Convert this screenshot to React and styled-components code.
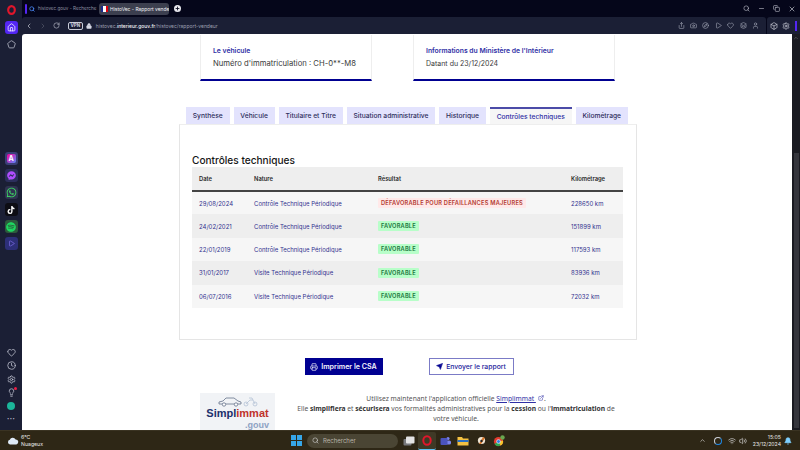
import React from 'react'
import styled, {createGlobalStyle} from 'styled-components'
import {
  Search, Minus, X, ChevronLeft, ChevronRight, RotateCw, Lock, Heart, Clock,
  Settings, Lightbulb, House, Printer, Send, ExternalLink, Camera, Plus,
  ChevronUp, Wifi, Volume2, Bell, Pentagon, Compass, Play, Layers, User,
  Share, Box, Copy
} from 'lucide-react'
import {FaWhatsapp, FaTiktok, FaSpotify, FaFacebookMessenger} from 'react-icons/fa'

const GlobalStyle = createGlobalStyle`
  html, body {
    margin: 0;
    width: 800px;
    height: 450px;
    overflow: hidden;
    background: #05061a;
  }
  * { box-sizing: border-box; }
  svg { flex: none; }
`

const tabs = [
  'Synthèse',
  'Véhicule',
  'Titulaire et Titre',
  'Situation administrative',
  'Historique',
  'Contrôles techniques',
  'Kilométrage'
]

const controls = [
  {date: '29/08/2024', nature: 'Contrôle Technique Périodique', result: 'DÉFAVORABLE POUR DÉFAILLANCES MAJEURES', bad: true, km: '228650 km'},
  {date: '24/02/2021', nature: 'Contrôle Technique Périodique', result: 'FAVORABLE', km: '151899 km'},
  {date: '22/01/2019', nature: 'Contrôle Technique Périodique', result: 'FAVORABLE', km: '117593 km'},
  {date: '31/01/2017', nature: 'Visite Technique Périodique', result: 'FAVORABLE', km: '83936 km'},
  {date: '06/07/2016', nature: 'Visite Technique Périodique', result: 'FAVORABLE', km: '72032 km'}
]

export default function App() {
  return (
    <Screen>
      <GlobalStyle />
      <Browser>
        <Sidebar>
          <OperaLogo />
          <HomeButton><House size={9} color="#fff" /></HomeButton>
          <SideIcon><Pentagon size={9} /></SideIcon>
          <AppGroup>
            <AppTile $bg="#3b3f78"><AppMark $bg="linear-gradient(135deg,#f09,#58f)">A</AppMark></AppTile>
            <AppTile $bg="#2c2f5c"><FaFacebookMessenger size={9} color="#b04dff" /></AppTile>
            <AppTile $bg="#2f3350"><FaWhatsapp size={11} color="#3fdc64" /></AppTile>
            <AppTile $bg="#0d0d14"><FaTiktok size={8} color="#fff" /></AppTile>
            <AppTile $bg="#2c5b3c"><FaSpotify size={10} color="#1ed760" /></AppTile>
            <AppTile $bg="#2d2f78"><Play size={7} color="#8f7bff" /></AppTile>
          </AppGroup>
          <BottomGroup>
            <SideIcon><Heart size={9} /></SideIcon>
            <SideIcon><Clock size={9} /></SideIcon>
            <SideIcon><Settings size={9} /></SideIcon>
            <SideIcon>
              <Lightbulb size={9} />
              <RedDot />
            </SideIcon>
            <SideIcon><GreenBadge /></SideIcon>
            <Dots>•••</Dots>
          </BottomGroup>
        </Sidebar>

        <Main>
          <TabStrip>
            <AccentBar />
            <BrowserTab>
              <Search size={6} color="#4d8dff" strokeWidth={3} />
              <TabLabel>histovec.gouv - Recherche</TabLabel>
            </BrowserTab>
            <BrowserTab $active>
              <Favicon><i /><i /><i /></Favicon>
              <TabLabel $active>HistoVec - Rapport vende</TabLabel>
            </BrowserTab>
            <NewTab><Plus size={5} strokeWidth={4} color="#05061a" /></NewTab>
            <WindowControls>
              <Search size={7} />
              <Minus size={7} />
              <Copy size={7} />
              <X size={8} />
            </WindowControls>
          </TabStrip>

          <ToolbarRow>
            <Toolbar>
              <NavIcons>
                <ChevronLeft size={8} />
                <ChevronRight size={8} opacity={0.35} />
                <RotateCw size={7} />
              </NavIcons>
              <VpnPill>VPN</VpnPill>
              <Lock size={6} color="#d6d8e4" fill="#d6d8e4" />
              <Url>histovec.<b>interieur.gouv.fr</b>/histovec/rapport-vendeur</Url>
              <ToolIcons>
                <Share size={7} />
                <Camera size={7} />
                <Compass size={7} />
                <Play size={7} />
                <Heart size={7} />
                <Layers size={7} />
                <User size={7} />
              </ToolIcons>
            </Toolbar>
            <ToolbarEnd>
              <Box size={8} />
              <Settings size={8} />
              <EndAccent />
            </ToolbarEnd>
          </ToolbarRow>

          <Viewport>
            <Page>
              <Container>
                <Cards>
                  <Card $width={172}>
                    <CardTitle>Le véhicule</CardTitle>
                    <CardText $size={7.7}>Numéro d'immatriculation : CH-0**-M8</CardText>
                  </Card>
                  <Card $width={202}>
                    <CardTitle>Informations du Ministère de l'Intérieur</CardTitle>
                    <CardText $size={7}>Datant du 23/12/2024</CardText>
                  </Card>
                </Cards>

                <Tabs>
                  {tabs.map(tab => (
                    <Tab key={tab} $active={tab === 'Contrôles techniques'}>{tab}</Tab>
                  ))}
                </Tabs>

                <Panel>
                  <Heading>Contrôles techniques</Heading>
                  <Table>
                    <thead>
                      <tr>
                        <Th $width={55}>Date</Th>
                        <Th $width={124}>Nature</Th>
                        <Th $width={193}>Résultat</Th>
                        <Th>Kilométrage</Th>
                      </tr>
                    </thead>
                    <tbody>
                      {controls.map(row => (
                        <Row key={row.date}>
                          <Td>{row.date}</Td>
                          <Td>{row.nature}</Td>
                          <Td><Badge $bad={row.bad}>{row.result}</Badge></Td>
                          <Td>{row.km}</Td>
                        </Row>
                      ))}
                    </tbody>
                  </Table>
                </Panel>

                <Actions>
                  <PrimaryButton><Printer size={8} />Imprimer le CSA</PrimaryButton>
                  <SecondaryButton><Send size={7} fill="#000091" />Envoyer le rapport</SecondaryButton>
                </Actions>

                <Promo>
                  <Logo>
                    <svg width="42" height="11" viewBox="0 0 42 11" fill="none" stroke="#64718a" strokeWidth="0.8">
                      <path d="M2 8 V6 L6 5 L9 2 H17 L21 5 L24 6 V8 Z" />
                      <circle cx="7" cy="8.5" r="1.7" fill="#fff" />
                      <circle cx="19" cy="8.5" r="1.7" fill="#fff" />
                      <g stroke="#b4c2d6">
                        <circle cx="29" cy="8" r="2" />
                        <circle cx="38" cy="8" r="2" />
                        <path d="M29 8 L33 4 H36 L38 8 M32 2 H35 L36 4" />
                      </g>
                    </svg>
                    <LogoName>Simpl<em>immat</em></LogoName>
                    <LogoGouv>.gouv</LogoGouv>
                  </Logo>
                  <PromoText>
                    Utilisez maintenant l'application officielle <PromoLink>Simplimmat <ExternalLink size={6} /></PromoLink>.<br />
                    Elle <b>simplifiera</b> et <b>sécurisera</b> vos formalités administratives pour la <b>cession</b> ou l'<b>immatriculation</b> de<br />
                    votre véhicule.
                  </PromoText>
                </Promo>
              </Container>
            </Page>
            <Scrollbar>
              <ChevronUp size={6} color="#777" />
              <ScrollThumb />
            </Scrollbar>
          </Viewport>
        </Main>
      </Browser>

      <Taskbar>
        <Weather>
          <svg width="12" height="9" viewBox="0 0 12 9">
            <path d="M3 8.5 A2.4 2.4 0 0 1 2.8 3.8 A3.2 3.2 0 0 1 8.6 3.4 A2.6 2.6 0 0 1 9.4 8.5 Z" fill="#dfeaf7" />
          </svg>
          <WeatherText>
            <span>6°C</span>
            <span>Nuageux</span>
          </WeatherText>
        </Weather>
        <TaskCenter>
          <WinLogo><i /><i /><i /><i /></WinLogo>
          <SearchPill><Search size={7} color="#d8d8d8" />Rechercher</SearchPill>
          <TaskIcon>
            <svg width="12" height="10" viewBox="0 0 12 10">
              <rect x="0.5" y="3" width="8" height="6.5" rx="1" fill="#77787c" />
              <rect x="3" y="0.5" width="8.5" height="7" rx="1" fill="#e4e4e4" />
            </svg>
          </TaskIcon>
          <TaskIcon $active>
            <svg width="10" height="11" viewBox="0 0 10 11">
              <ellipse cx="5" cy="5.5" rx="3.7" ry="4.3" fill="none" stroke="#e0162b" strokeWidth="2" />
            </svg>
          </TaskIcon>
          <TaskIcon>
            <svg width="11" height="10" viewBox="0 0 11 10">
              <circle cx="8" cy="2.5" r="1.6" fill="#7b83eb" />
              <rect x="6" y="4.5" width="5" height="4" rx="1.5" fill="#7b83eb" />
              <rect x="0.5" y="2" width="7" height="7" rx="1" fill="#4b53bc" />
            </svg>
          </TaskIcon>
          <TaskIcon>
            <svg width="12" height="10" viewBox="0 0 12 10">
              <path d="M0.5 1 H5 L6 2.5 H11.5 V9.5 H0.5 Z" fill="#f5c242" />
              <rect x="0.5" y="4" width="11" height="2" fill="#2a6fc4" />
            </svg>
          </TaskIcon>
          <TaskIcon>
            <svg width="11" height="11" viewBox="0 0 11 11">
              <circle cx="5.5" cy="5.5" r="3.6" fill="#efe5d4" />
              <path d="M3 9 L7 2 L9 3 L5 9 Z" fill="#d9772b" />
              <circle cx="5.5" cy="6" r="1.2" fill="#222" />
            </svg>
          </TaskIcon>
          <TaskIcon>
            <svg width="12" height="12" viewBox="0 0 12 12">
              <circle cx="5.5" cy="6.5" r="4.6" fill="#e33b2e" />
              <path d="M5.5 6.5 L1.5 9 A4.6 4.6 0 0 0 7.5 10.6 Z" fill="#2da94f" />
              <path d="M5.5 6.5 L7.5 10.6 A4.6 4.6 0 0 0 10 5.5 Z" fill="#f7c52b" />
              <circle cx="5.5" cy="6.5" r="1.9" fill="#2f7de1" stroke="#fff" strokeWidth="0.6" />
              <circle cx="9.5" cy="2.5" r="2.2" fill="#6aa84f" />
            </svg>
          </TaskIcon>
        </TaskCenter>
        <Tray>
          <ChevronUp size={7} color="#e8e8e8" />
          <TrayApp />
          <Wifi size={8} color="#d6d6d6" />
          <Volume2 size={8} color="#d6d6d6" />
          <ClockText>
            <span>15:05</span>
            <span>23/12/2024</span>
          </ClockText>
          <Bell size={8} color="#7fd0ff" fill="#7fd0ff" />
        </Tray>
      </Taskbar>
    </Screen>
  )
}

const OperaLogo = () => (
  <svg width="9" height="10" viewBox="0 0 9 10" style={{marginBottom: 6}}>
    <ellipse cx="4.5" cy="5" rx="3.3" ry="3.9" fill="none" stroke="#e0162b" strokeWidth="2.2" />
  </svg>
)

//styled components

const Screen = styled.div`
  width: 800px;
  height: 450px;
  display: flex;
  flex-direction: column;
  overflow: hidden;
  font-family: 'Inter', 'Noto Sans', sans-serif;
`
const Browser = styled.div`
  height: 430px;
  display: flex;
  background: #05061a;
`
const Sidebar = styled.aside`
  width: 22px;
  flex: none;
  display: flex;
  flex-direction: column;
  align-items: center;
  padding: 5px 0 9px 0;
  background: #1b1f35;
`
const HomeButton = styled.div`
  width: 13px;
  height: 13px;
  border-radius: 3px;
  display: flex;
  align-items: center;
  justify-content: center;
  background: #5326f2;
`
const SideIcon = styled.div`
  position: relative;
  width: 13px;
  height: 13px;
  margin-top: 4px;
  display: flex;
  align-items: center;
  justify-content: center;
  color: #c4c7d4;
`
const AppGroup = styled.div`
  margin-top: 101px;
  display: flex;
  flex-direction: column;
  gap: 4px;
`
const AppTile = styled.div`
  width: 13px;
  height: 13px;
  border-radius: 3px;
  display: flex;
  align-items: center;
  justify-content: center;
  background: ${props => props.$bg};
`
const AppMark = styled.span`
  width: 9px;
  height: 9px;
  border-radius: 2px;
  color: #fff;
  font-size: 7px;
  line-height: 9px;
  font-weight: 700;
  text-align: center;
  background: ${props => props.$bg};
`
const BottomGroup = styled.div`
  margin-top: auto;
  display: flex;
  flex-direction: column;
  align-items: center;
  gap: 0.4px;
  ${SideIcon} { margin-top: 0; }
`
const RedDot = styled.span`
  position: absolute;
  top: 1px;
  right: 1px;
  width: 3px;
  height: 3px;
  background: #ef1f45;
  border-radius: 50%;
`
const GreenBadge = styled.span`
  width: 8px;
  height: 8px;
  border-radius: 50%;
  background: #1bb59a;
`
const Dots = styled.div`
  margin-top: 3px;
  color: #b4b7c6;
  font-size: 4px;
  letter-spacing: 0.5px;
`
const Main = styled.div`
  flex: 1;
  min-width: 0;
  display: flex;
  flex-direction: column;
`
const TabStrip = styled.div`
  height: 17px;
  flex: none;
  display: flex;
  align-items: center;
  gap: 1px;
  padding-left: 3px;
  background: #05061a;
`
const AccentBar = styled.div`
  width: 2px;
  height: 10px;
  border-radius: 1px;
  background: #5326f2;
`
const BrowserTab = styled.div`
  width: 70px;
  height: 12px;
  display: flex;
  align-items: center;
  gap: ${props => (props.$active ? '2px' : '3px')};
  padding-left: ${props => (props.$active ? '2px' : '1px')};
  overflow: hidden;
  border-radius: 3px;
  background: ${props => (props.$active ? '#3c3f4f' : 'transparent')};
`
const Favicon = styled.span`
  flex: none;
  width: 7px;
  height: 6px;
  display: flex;
  i { flex: 1; }
  i:nth-child(1) { background: #1a2a8c; }
  i:nth-child(2) { background: #fff; }
  i:nth-child(3) { background: #e1000f; }
`
const TabLabel = styled.span`
  white-space: nowrap;
  font-size: ${props => (props.$active ? '4.9px' : '4.6px')};
  color: ${props => (props.$active ? '#f2f2f6' : '#8f91a2')};
`
const NewTab = styled.div`
  width: 7px;
  height: 7px;
  margin-left: 4px;
  border-radius: 50%;
  display: flex;
  align-items: center;
  justify-content: center;
  background: #e8e8ee;
`
const WindowControls = styled.div`
  margin-left: auto;
  padding-right: 4px;
  display: flex;
  align-items: center;
  gap: 8px;
  color: #c6c8d2;
`
const ToolbarRow = styled.div`
  height: 17px;
  flex: none;
  display: flex;
  gap: 1px;
  background: #05061a;
`
const Toolbar = styled.div`
  flex: 1;
  display: flex;
  align-items: center;
  padding: 0 7px 0 3px;
  background: #1b1f35;
  border-radius: 3px 3px 0 0;
`
const NavIcons = styled.div`
  display: flex;
  align-items: center;
  gap: 6px;
  color: #c9ccd8;
`
const VpnPill = styled.span`
  margin: 0 3px 0 8px;
  padding: 0 1.5px;
  border: 1px solid #c9ccd8;
  border-radius: 2px;
  font-size: 4.5px;
  line-height: 6px;
  font-weight: 700;
  color: #d6d8e4;
`
const Url = styled.span`
  margin-left: 4px;
  font-size: 5px;
  white-space: nowrap;
  color: #9d9fb0;
  b { font-weight: 500; color: #f2f2f6; }
`
const ToolIcons = styled.div`
  margin-left: auto;
  display: flex;
  align-items: center;
  gap: 5.4px;
  color: #a9acbc;
`
const ToolbarEnd = styled.div`
  width: 33px;
  flex: none;
  display: flex;
  align-items: center;
  gap: 4px;
  padding-left: 3px;
  color: #d0d2dc;
  background: #1b1f35;
  border-radius: 3px 0 0 0;
`
const EndAccent = styled.span`
  width: 2px;
  height: 10px;
  margin-left: 1px;
  background: #5326f2;
`
const Viewport = styled.div`
  flex: 1;
  min-height: 0;
  display: flex;
  background: #1b1f35;
`
const Page = styled.main`
  flex: 1;
  min-width: 0;
  overflow: hidden;
  background: #fff;
  border-radius: 3px 0 0 0;
`
const Container = styled.div`
  width: 458px;
  margin: 1px 0 0 157px;
`
const Cards = styled.div`
  display: flex;
  gap: 41px;
  padding-left: 21px;
`
const Card = styled.section`
  width: ${props => props.$width}px;
  height: 46px;
  padding: 11px 0 0 12px;
  white-space: nowrap;
  border-left: 1px solid #eee;
  border-right: 1px solid #eee;
  border-bottom: 2px solid #000091;
`
const CardTitle = styled.h3`
  margin: 0;
  font-size: 6.8px;
  line-height: 10px;
  font-weight: 600;
  color: #2f2fa5;
`
const CardText = styled.p`
  margin: 3px 0 0;
  font-size: ${props => props.$size}px;
  line-height: 10px;
  color: #3a3a3a;
`
const Tabs = styled.div`
  display: flex;
  gap: 4px;
  margin-top: 26px;
  padding-left: 7px;
`
const Tab = styled.div`
  height: 17px;
  padding: 0 6.8px;
  display: flex;
  align-items: center;
  white-space: nowrap;
  font-size: 6.7px;
  font-weight: 500;
  color: ${props => (props.$active ? '#2f2fa5' : '#2e2e5c')};
  background: ${props => (props.$active ? '#f6f6f6' : '#e3e3fd')};
  border-top: ${props => (props.$active ? '2px solid #4b4ba8' : 'none')};
`
const Panel = styled.section`
  height: 216px;
  padding: 29px 12px 0;
  border: 1px solid #e5e5e5;
  border-top-color: #eee;
`
const Heading = styled.h2`
  margin: 0;
  font-size: 10.1px;
  line-height: 13px;
  font-weight: 500;
  color: #161616;
`
const Table = styled.table`
  width: 431px;
  border-collapse: collapse;
  table-layout: fixed;
`
const Th = styled.th`
  width: ${props => (props.$width ? `${props.$width}px` : 'auto')};
  height: 24px;
  padding: 0 0 0 7px;
  text-align: left;
  font-size: 5.8px;
  font-weight: 600;
  color: #2a2a2a;
  background: #eee;
  border-bottom: 2px solid #444;
`
const Row = styled.tr`
  height: 23.4px;
  background: #f6f6f6;
  &:nth-child(even) { background: #eee; }
`
const Td = styled.td`
  padding: 0 0 0 7px;
  font-size: 6px;
  white-space: nowrap;
  color: #32328f;
`
const Badge = styled.span`
  display: inline-block;
  padding: 0 3px;
  border-radius: 1px;
  font-size: 5.7px;
  line-height: 10px;
  font-weight: 600;
  letter-spacing: 0.2px;
  color: ${props => (props.$bad ? '#b3392f' : '#18753c')};
  background: ${props => (props.$bad ? '#ffe9e9' : '#b8fec9')};
`
const Actions = styled.div`
  display: flex;
  justify-content: center;
  gap: 46px;
  margin-top: 18px;
  padding-left: 2px;
`
const PrimaryButton = styled.button`
  width: 78px;
  height: 17px;
  padding: 0;
  display: flex;
  align-items: center;
  justify-content: center;
  gap: 3px;
  font-family: inherit;
  font-size: 7.1px;
  font-weight: 600;
  color: #f5f5fe;
  background: #000091;
  border: none;
`
const SecondaryButton = styled(PrimaryButton)`
  width: 85px;
  font-size: 6.8px;
  font-weight: 500;
  color: #1d1d9c;
  background: #fff;
  border: 1px solid #7b7bc6;
`
const Promo = styled.div`
  display: flex;
  gap: 15px;
  margin-top: 18px;
  padding-left: 21px;
`
const Logo = styled.div`
  width: 75px;
  height: 37px;
  flex: none;
  display: flex;
  flex-direction: column;
  align-items: center;
  padding-top: 3px;
  background: #f1f3f6;
`
const LogoName = styled.div`
  font-family: 'Liberation Sans', sans-serif;
  font-size: 11px;
  line-height: 12px;
  font-weight: 700;
  color: #1b2f6b;
  em { font-style: normal; color: #c0322b; }
`
const LogoGouv = styled.div`
  align-self: flex-end;
  margin: 1px 6px 0 0;
  font-family: 'Liberation Sans', sans-serif;
  font-size: 9px;
  line-height: 10px;
  font-weight: 700;
  color: #8ea2c4;
`
const PromoText = styled.p`
  width: 332px;
  flex: none;
  margin: 0;
  padding-top: 1px;
  text-align: center;
  white-space: nowrap;
  font-family: 'Noto Sans', sans-serif;
  font-size: 6.7px;
  line-height: 10.2px;
  color: #555;
  b { font-weight: 700; color: #333; }
`
const PromoLink = styled.span`
  color: #2f2fa5;
  text-decoration: underline;
  svg { margin-left: 2px; }
`
const Scrollbar = styled.div`
  width: 8px;
  flex: none;
  display: flex;
  flex-direction: column;
  align-items: center;
  padding-top: 1px;
  background: #1a1b22;
`
const ScrollThumb = styled.div`
  width: 5px;
  height: 275px;
  margin-top: 112px;
  background: #35363d;
`
const Taskbar = styled.footer`
  height: 20px;
  flex: none;
  display: grid;
  grid-template-columns: 291px auto 1fr;
  align-items: center;
  background: #2e2716;
  border-top: 1px solid #3a3322;
`
const Weather = styled.div`
  display: flex;
  align-items: center;
  gap: 2px;
  padding-left: 7px;
`
const WeatherText = styled.div`
  display: flex;
  flex-direction: column;
  font-size: 5.2px;
  line-height: 7px;
  color: #e8e8e8;
`
const TaskCenter = styled.div`
  display: flex;
  align-items: center;
`
const WinLogo = styled.div`
  width: 11px;
  height: 11px;
  margin-right: 5px;
  display: grid;
  grid-template-columns: 1fr 1fr;
  gap: 0.6px;
  i { background: #36a6e8; }
`
const SearchPill = styled.div`
  width: 91px;
  height: 14px;
  margin-right: 2px;
  padding-left: 5px;
  border-radius: 7px;
  display: flex;
  align-items: center;
  gap: 4px;
  font-size: 6px;
  color: #b8b4a8;
  background: #4a4534;
`
const TaskIcon = styled.div`
  width: 18px;
  height: 18px;
  display: flex;
  align-items: center;
  justify-content: center;
  border-radius: 2px;
  background: ${props => (props.$active ? '#3f3926' : 'transparent')};
  border-bottom: ${props => (props.$active ? '1px solid #5bc0f5' : 'none')};
`
const Tray = styled.div`
  display: flex;
  align-items: center;
  justify-content: flex-end;
  gap: 3px;
  padding-right: 8px;
`
const TrayApp = styled.span`
  width: 8px;
  height: 8px;
  margin: 0 3px 0 5px;
  border-radius: 50%;
  border: 1.5px solid #cfd3da;
  border-right-color: #1e88e5;
  border-bottom-color: #1e88e5;
`
const ClockText = styled.div`
  margin-left: 3px;
  display: flex;
  flex-direction: column;
  align-items: flex-end;
  font-size: 5.2px;
  line-height: 7px;
  color: #e8e8e8;
`
